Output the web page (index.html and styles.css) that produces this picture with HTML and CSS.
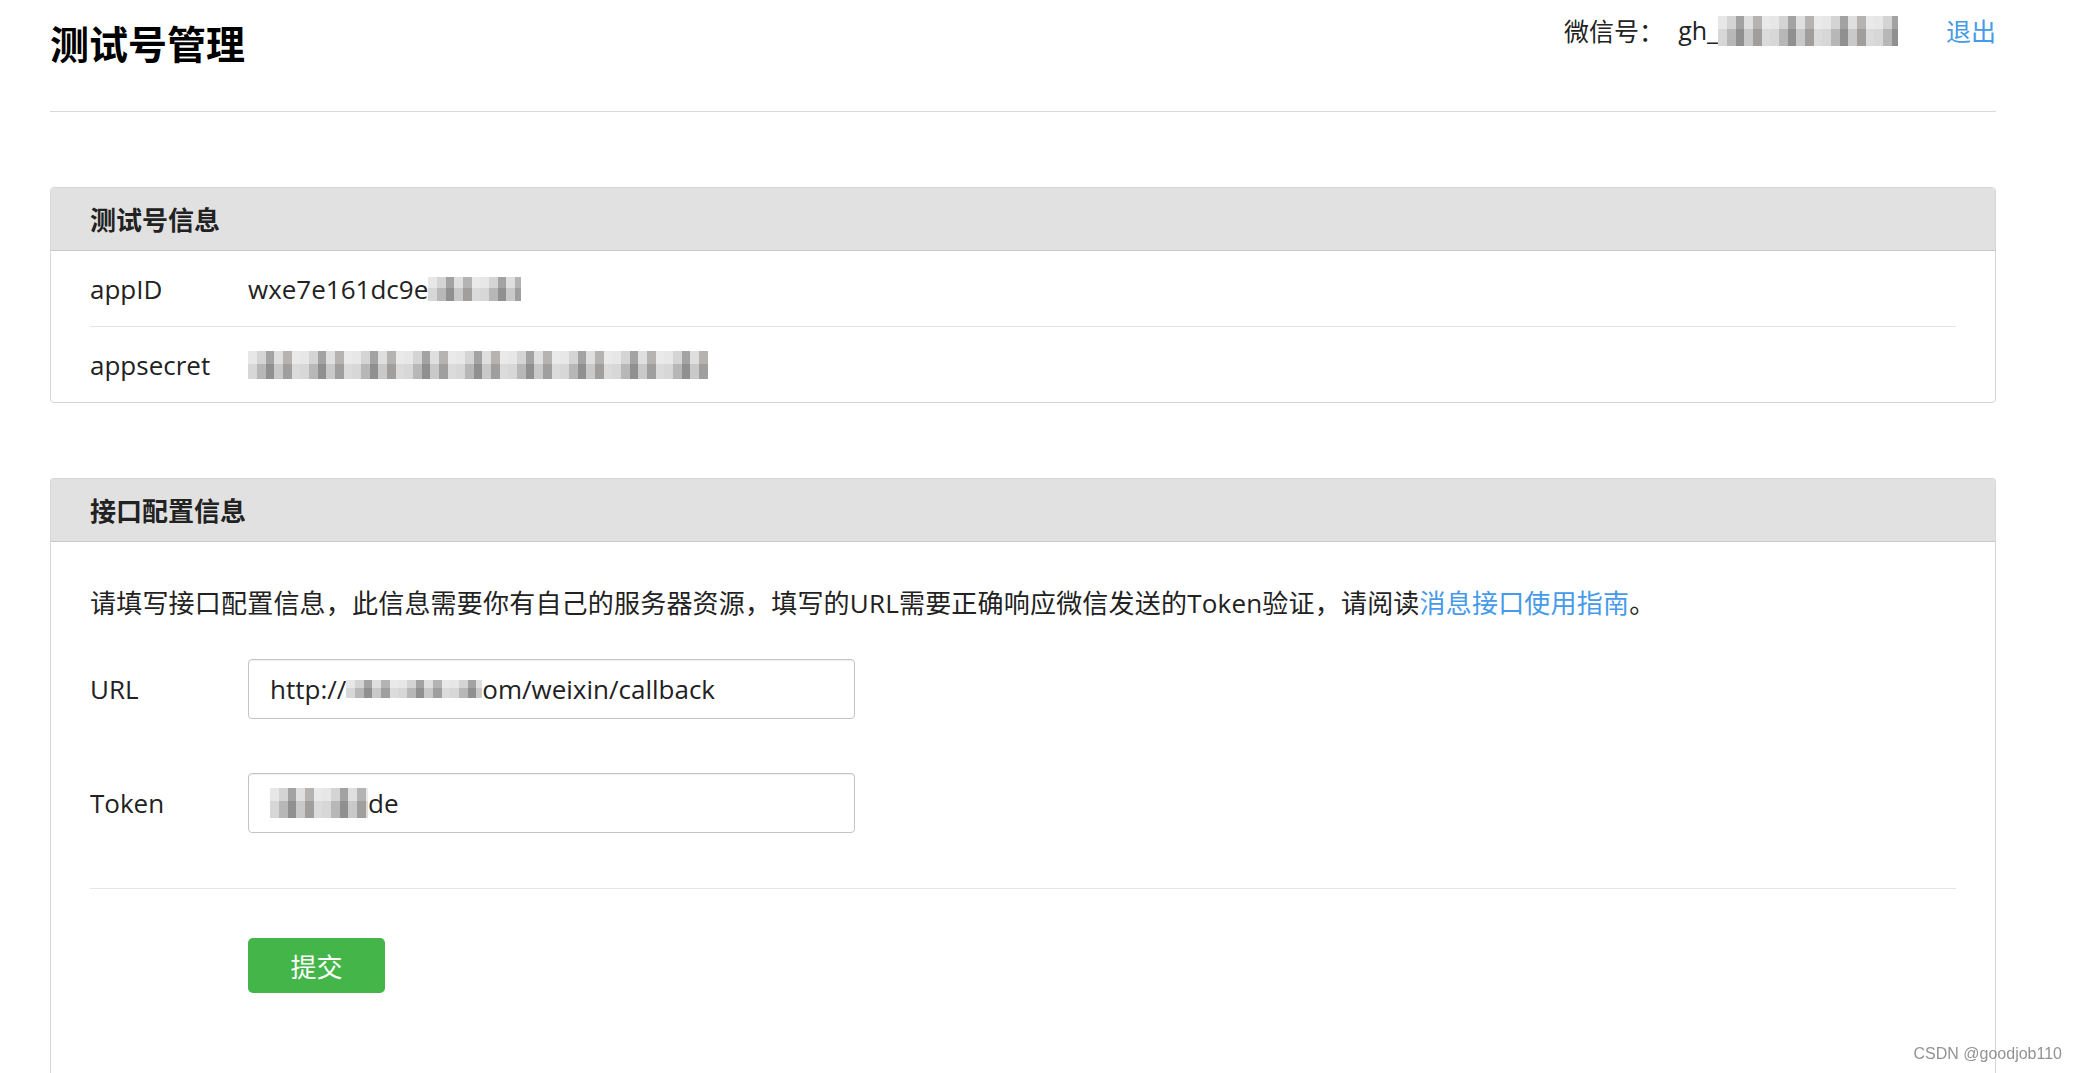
FILE: index.html
```html
<!DOCTYPE html>
<html lang="zh-CN">
<head>
    <meta charset="UTF-8">
    <title>测试号管理</title>
    <link rel="stylesheet" href="styles.css">
</head>
<body>
    <div class="page">
        <header class="top">
            <h1>测试号管理</h1>
            <div class="account">
                <span>微信号：</span>
                <span class="gh">gh_</span><span class="mosaic mosaic-gh"></span>
                <a class="logout" href="#">退出</a>
            </div>
        </header>

        <section class="panel">
            <h2 class="panel-title">测试号信息</h2>
            <div class="info-row">
                <span class="label">appID</span>
                <span class="value">wxe7e161dc9e<span class="mosaic mosaic-appid"></span></span>
            </div>
            <div class="info-row">
                <span class="label">appsecret</span>
                <span class="value"><span class="mosaic mosaic-secret"></span></span>
            </div>
        </section>

        <section class="panel panel-config">
            <h2 class="panel-title">接口配置信息</h2>
            <div class="panel-body">
                <p class="desc">请填写接口配置信息，此信息需要你有自己的服务器资源，填写的URL需要正确响应微信发送的Token验证，请阅读<a href="#">消息接口使用指南</a>。</p>
                <div class="form-row">
                    <span class="label">URL</span>
                    <div class="input">http://<span class="mosaic mosaic-url"></span>om/weixin/callback</div>
                </div>
                <div class="form-row form-row-token">
                    <span class="label">Token</span>
                    <div class="input"><span class="mosaic mosaic-token"></span>de</div>
                </div>
                <div class="form-actions">
                    <button class="submit-button">提交</button>
                </div>
            </div>
        </section>
    </div>
    <div class="watermark">CSDN @goodjob110</div>
</body>
</html>
```

FILE: styles.css
```css
body {
    margin: 0;
    background-color: #fff;
    font-family: "Open Sans", "Noto Sans CJK SC", sans-serif;
    color: #222;
}

.page {
    margin-left: 50px;
    width: 1946px;
}

.top {
    display: flex;
    justify-content: space-between;
    align-items: flex-start;
    height: 111px;
    border-bottom: 1px solid #d9d9d9;
}

.top h1 {
    margin: 16px 0 0;
    font-size: 39px;
    line-height: 52px;
    font-weight: bold;
    color: #000;
    font-family: "Noto Sans CJK SC", sans-serif;
}

.account {
    display: flex;
    align-items: center;
    margin-top: 14px;
    height: 32px;
    font-size: 25px;
    color: #222;
}

.account .gh {
    margin-left: 14px;
}

.logout {
    margin-left: 48px;
    color: #459ae9;
    text-decoration: none;
}

/* pixelated blur over private data */
.mosaic {
    display: inline-block;
    vertical-align: middle;
    background-color: #c2c2c2;
    background-image:
        repeating-linear-gradient(90deg, rgba(255,255,255,0.45) 0 9px, rgba(0,0,0,0) 9px 18px, rgba(70,70,70,0.35) 18px 26px, rgba(255,255,255,0.25) 26px 35px, rgba(110,100,100,0.3) 35px 44px, rgba(255,255,255,0.5) 44px 52px),
        linear-gradient(180deg, rgba(255,255,255,0.3) 0 45%, rgba(0,0,0,0.06) 45% 100%);
}

.mosaic-gh {
    width: 180px;
    height: 30px;
    margin-top: 2px;
}

.mosaic-appid {
    width: 93px;
    height: 24px;
}

.mosaic-secret {
    width: 460px;
    height: 28px;
}

.mosaic-url {
    width: 136px;
    height: 18px;
}

.mosaic-token {
    width: 98px;
    height: 30px;
}

.panel {
    margin-top: 75px;
    border: 1px solid #d6d6d6;
    border-radius: 4px;
    overflow: hidden;
}

.panel-title {
    margin: 0;
    height: 62px;
    line-height: 62px;
    padding-left: 39px;
    background-color: #e1e1e1;
    border-bottom: 1px solid #c9c9c9;
    font-size: 26px;
    font-weight: bold;
    color: #222;
    font-family: "Noto Sans CJK SC", sans-serif;
}

.info-row {
    display: flex;
    align-items: center;
    height: 75px;
    margin: 0 39px;
    font-size: 26px;
}

.info-row + .info-row {
    border-top: 1px solid #e5e5e5;
}

.label {
    width: 158px;
    flex-shrink: 0;
    font-size: 26px;
    color: #222;
}

.value {
    display: flex;
    align-items: center;
}

.panel-config {
    border-bottom: none;
    border-radius: 4px 4px 0 0;
}

.panel-body {
    padding: 41px 39px 120px;
}

.desc {
    margin: 0;
    font-size: 26px;
    line-height: 40px;
    letter-spacing: 0.2px;
    color: #222;
}

.desc a {
    color: #459ae9;
    text-decoration: none;
}

.form-row {
    display: flex;
    align-items: center;
    margin-top: 36px;
}

.form-row-token {
    margin-top: 54px;
}

.input {
    display: flex;
    align-items: center;
    box-sizing: border-box;
    width: 607px;
    height: 60px;
    padding-left: 21px;
    border: 1px solid #c4c4c4;
    border-radius: 4px;
    box-shadow: inset 0 1px 1px rgba(0, 0, 0, 0.06);
    font-size: 26px;
    color: #222;
}

.form-actions {
    margin-top: 55px;
    padding-top: 49px;
    padding-left: 158px;
    border-top: 1px solid #e5e5e5;
}

.submit-button {
    width: 137px;
    height: 55px;
    border: none;
    border-radius: 5px;
    background-color: #44b549;
    color: #fff;
    font-size: 26px;
    font-family: "Noto Sans CJK SC", sans-serif;
    cursor: pointer;
}

.watermark {
    position: fixed;
    right: 14px;
    bottom: 10px;
    font-family: "Liberation Sans", sans-serif;
    font-size: 16px;
    color: rgba(110, 110, 110, 0.75);
}
```
